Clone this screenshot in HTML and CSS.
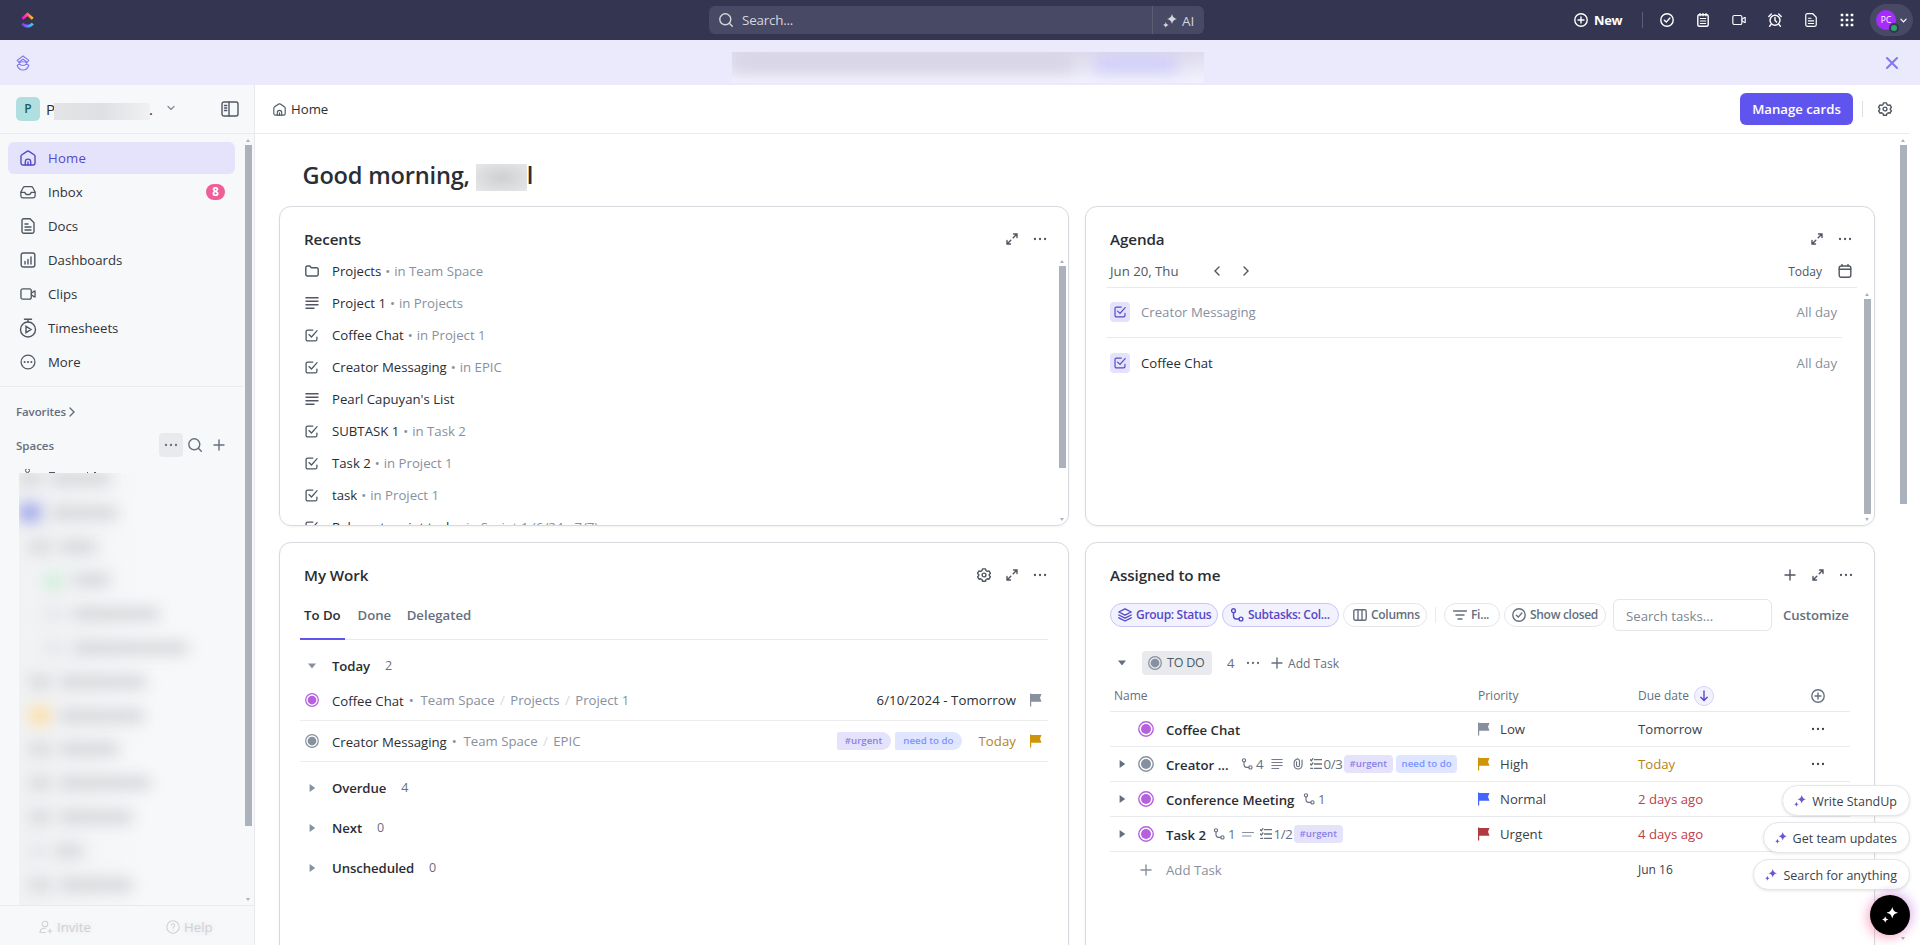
FILE: index.html
```html
<!DOCTYPE html>
<html lang="en">
<head>
<meta charset="utf-8">
<title>Home</title>
<link rel="stylesheet" href="styles.css">
</head>
<body>
<svg class="defs" width="0" height="0">
  <defs>
    <linearGradient id="g1" x1="0" x2="1"><stop offset="0" stop-color="#ff02f0"/><stop offset=".5" stop-color="#ff5a7a"/><stop offset="1" stop-color="#ffc800"/></linearGradient>
    <linearGradient id="g2" x1="0" x2="1"><stop offset="0" stop-color="#8930fd"/><stop offset="1" stop-color="#49ccf9"/></linearGradient>
  </defs>
  <symbol id="home" viewBox="0 0 16 16"><path d="M1 6.200Q1 5.500 1.600 5L7 1.300q1-.6 2 0L14.400 5q.6.500.6 1.200V13a2 2 0 0 1-2 2H3a2 2 0 0 1-2-2z"/><path d="M5.300 15v-3.200a2.700 2.700 0 0 1 5.400 0V15M8 12v3" /></symbol>
  <symbol id="inbox" viewBox="0 0 18 16"><path d="M5.200 2h7.600q1 0 1.500.9L17 8v4.500a2 2 0 0 1-2 2H3a2 2 0 0 1-2-2V8l2.700-5.100Q4.200 2 5.200 2z"/><path d="M1 8.300h4.300c.6 2 1.800 2.700 3.700 2.700s3.100-.7 3.700-2.700H17"/></symbol>
  <symbol id="doc" viewBox="0 0 16 16"><path d="M2 2.500A1.700 1.700 0 0 1 3.700.8H10l4 4v8.700a1.700 1.700 0 0 1-1.700 1.700H3.700A1.700 1.700 0 0 1 2 13.500z"/><path d="M5 6h3M5 9h6M5 12h6"/></symbol>
  <symbol id="dash" viewBox="0 0 16 16"><rect x="1.200" y="1" width="13.600" height="14" rx="2"/><path d="M5 9.500V12M8 7.500V12M11 5V12"/></symbol>
  <symbol id="video" viewBox="0 0 17 14"><rect x="1" y="1.500" width="11" height="11" rx="2"/><path d="M12 6.200l3-2.200h1v6h-1l-3-2.200"/></symbol>
  <symbol id="timer" viewBox="0 0 18 20"><circle cx="9" cy="11.500" r="7.500"/><path d="M5.500 1.300h7M9 1.300v2.500M7 8.300v6.400l5-3.200z"/></symbol>
  <symbol id="more" viewBox="0 0 18 18"><circle cx="9" cy="9" r="7.800"/><path class="dotline" d="M5.200 9h0M9 9h0M12.800 9h0"/></symbol>
  <symbol id="dots" viewBox="0 0 14 14"><path class="dotline" d="M2 7h0M7 7h0M12 7h0"/></symbol>
  <symbol id="search" viewBox="0 0 14 14"><circle cx="6.300" cy="6.300" r="5.500"/><path d="M10.300 10.300 13.300 13.300"/></symbol>
  <symbol id="plus" viewBox="0 0 12 12"><path d="M6 1v10M1 6h10"/></symbol>
  <symbol id="pluscircle" viewBox="0 0 14 14"><circle cx="7" cy="7" r="6.200"/><path d="M7 4v6M4 7h6"/></symbol>
  <symbol id="checkcircle" viewBox="0 0 14 14"><circle cx="7" cy="7" r="6.200"/><path d="M4.300 7.200 6.300 9.100 9.900 5"/></symbol>
  <symbol id="help" viewBox="0 0 14 14"><circle cx="7" cy="7" r="6.200"/><path d="M5.300 5.500a1.700 1.700 0 1 1 2.500 1.500q-.8.400-.8 1.200M7 10.300h0"/></symbol>
  <symbol id="person" viewBox="0 0 14 14"><circle cx="6" cy="4" r="2.800"/><path d="M6.500 12.500H1c0-3.500 2.500-4.500 5.500-4.300M11 9v4M9 11h4"/></symbol>
  <symbol id="notepad" viewBox="0 0 14 14"><rect x="1.800" y="1.800" width="10.400" height="11.400" rx="1.500"/><path d="M4 .3v2.500M7 .3v2.500M10 .3v2.500M4.300 5.500h5.400M4.300 8h5.400M4.300 10.500h5.400" stroke-width="1.200"/></symbol>
  <symbol id="alarm" viewBox="0 0 14 14"><circle cx="7" cy="7.300" r="5"/><path d="M7 4.500v3L8.600 9M.8 3.400 3.300 1M13.200 3.400 10.700 1M3 11.500l-1.400 1.700M11 11.500l1.400 1.700"/></symbol>
  <symbol id="apps" viewBox="0 0 14 14"><path class="appline" d="M2 2h0M7 2h0M12 2h0M2 7h0M7 7h0M12 7h0M2 12h0M7 12h0M12 12h0"/></symbol>
  <symbol id="chev" viewBox="0 0 8 8"><path d="M1 2.500 4 5.500 7 2.500"/></symbol>
  <symbol id="right" viewBox="0 0 8 12"><path d="M2 2l4 4-4 4"/></symbol>
  <symbol id="left" viewBox="0 0 8 12"><path d="M6 2 2 6l4 4"/></symbol>
  <symbol id="gear" viewBox="0 0 14 14"><path d="M5.500.9h3l.5 1.700 1.300.8 1.700-.5 1.400 2.500L12.300 6.500v1.200l1.200 1-1.500 2.500-1.700-.4-1.300.7-.5 1.700h-3L5 11.500l-1.300-.7-1.700.4L.5 8.700l1.200-1V6.500L.5 5.400 2 2.900l1.700.5L5 2.600z" stroke-linejoin="round"/><circle cx="7" cy="7" r="1.900"/></symbol>
  <symbol id="expand" viewBox="0 0 12 12"><path d="M7.500 1H11v3.500M11 1 7.200 4.800M4.500 11H1V7.500M1 11 4.800 7.200"/></symbol>
  <symbol id="folder" viewBox="0 0 14 12"><path d="M.8 2.500A1.500 1.500 0 0 1 2.300 1h2.500l1.500 1.700h5.400a1.500 1.500 0 0 1 1.500 1.500v5.300a1.500 1.500 0 0 1-1.500 1.500H2.300A1.500 1.500 0 0 1 .8 9.500z"/></symbol>
  <symbol id="list" viewBox="0 0 14 12"><path d="M.5 .8h13M.5 4.300h13M.5 7.800h13M.5 11.200h9"/></symbol>
  <symbol id="list2" viewBox="0 0 12 12"><path d="M.5 4.500h11M.5 8h8.500"/></symbol>
  <symbol id="task" viewBox="0 0 14 14"><path d="M8.500 1.200H2.800A1.600 1.600 0 0 0 1.200 2.800v8.400a1.600 1.600 0 0 0 1.600 1.600h8.400a1.600 1.600 0 0 0 1.600-1.600V8.700M4.200 6 7 8.600 13 1.800"/></symbol>
  <symbol id="cal" viewBox="0 0 14 14"><rect x="1.200" y="2" width="11.600" height="11.300" rx="2"/><path d="M1.200 5.200h11.600M4 .3V2M10 .3V2"/></symbol>
  <symbol id="flag" viewBox="0 0 12 14"><path class="solid" d="M0 .5h1.200v13H0zM1 1h10.500l-1.500 3.800 1.500 3.900H1z"/></symbol>
  <symbol id="status" viewBox="0 0 16 16"><circle cx="8" cy="8" r="7.200"/><circle class="solid" cx="8" cy="8" r="5"/></symbol>
  <symbol id="layers" viewBox="0 0 14 14"><path d="M7 .8 13.200 4 7 7.200.8 4zM.8 7 7 10.200 13.200 7M.8 9.800 7 13l6.200-3.200" stroke-linejoin="round"/></symbol>
  <symbol id="sub" viewBox="0 0 14 14"><circle cx="3.500" cy="2.700" r="1.900"/><circle cx="11" cy="11" r="1.900"/><path d="M3.500 4.600V8a3 3 0 0 0 3 3h2.600"/></symbol>
  <symbol id="cols" viewBox="0 0 14 12"><rect x=".8" y=".8" width="12.400" height="10.400" rx="1.500"/><path d="M5 1v10M9 1v10"/></symbol>
  <symbol id="filter" viewBox="0 0 14 10"><path d="M.5 1h13M3 5h8M5 9h4"/></symbol>
  <symbol id="checklist" viewBox="0 0 12 12"><path d="M4.500 1.700H12M4.500 6H12M4.500 10.300H12M.3 1.700l1 1 1.600-2M.3 6l1 1 1.600-2M.6 10.300h2"/></symbol>
  <symbol id="clip" viewBox="0 0 12 14"><path d="M4.300 4.500v4a1.700 1.700 0 0 0 3.400 0V3.300a2.300 2.300 0 0 0-3.500-1.900L2.700 2.600A3.500 3.500 0 0 0 1.500 5v3.200a4.600 4.600 0 0 0 9.200 0V2.500"/></symbol>
  <symbol id="down" viewBox="0 0 10 12"><path d="M5 1v9.500M1.800 7.300 5 10.500l3.200-3.200"/></symbol>
  <symbol id="spark" viewBox="0 0 14 14"><path class="solid" d="M9 0c.9 3.200 1.800 4.100 5 5-3.200.9-4.100 1.800-5 5-.9-3.200-1.800-4.100-5-5 3.200-.9 4.100-1.800 5-5zM2.800 8c.5 1.900 1 2.400 2.900 2.900-1.900.5-2.400 1-2.900 2.900-.5-1.900-1-2.400-2.800-2.900 1.800-.5 2.300-1 2.800-2.900z"/></symbol>
  <symbol id="panel" viewBox="0 0 18 16"><rect x="1" y="1" width="16" height="14" rx="2"/><path d="M8 1v14M3.500 4.500h2.300M3.500 7h2.300M3.500 9.500h2.300"/></symbol>
  <symbol id="x" viewBox="0 0 12 12"><path d="M1 1l10 10M11 1 1 11"/></symbol>
</svg>

<header class="topbar">
  <svg class="logo" viewBox="0 0 13 16"><path d="M1.300 6.800 6.500 2.200l5.200 4.600" fill="none" stroke="url(#g1)" stroke-width="2.800"/><path d="M1.200 11.600c3 3.500 7.600 3.500 10.600 0" fill="none" stroke="url(#g2)" stroke-width="2.800"/></svg>
  <div class="searchbar">
    <svg class="i s14"><use href="#search"/></svg><span class="ph">Search...</span>
    <div class="ai"><svg class="i s14"><use href="#spark"/></svg><span>AI</span></div>
  </div>
  <div class="tools">
    <svg class="i s14"><use href="#pluscircle"/></svg><b>New</b><i class="vline"></i>
    <div class="toolicons">
      <svg class="i s14"><use href="#checkcircle"/></svg>
      <svg class="i s14"><use href="#notepad"/></svg>
      <svg class="i s14"><use href="#video"/></svg>
      <svg class="i s14"><use href="#alarm"/></svg>
      <svg class="i s14"><use href="#doc"/></svg>
      <svg class="i s14"><use href="#apps"/></svg>
    </div>
    <div class="user"><span class="ava">PC<i class="online"></i></span><svg class="i chv"><use href="#chev"/></svg></div>
  </div>
</header>

<div class="banner">
  <svg class="i bicon" viewBox="0 0 14 16"><path d="M7 1 1.200 5.300l1.500 2L7 4.200l4.300 3.100 1.500-2zM3.600 8C4 6.300 10 6.300 10.400 8M1.200 10.500l1.900-1.600c2.200 2.200 5.600 2.200 7.800 0l1.900 1.600C11.500 14 9.500 15 7 15s-4.500-1-5.800-4.500z"/></svg>
  <div class="bblur"><i class="b1"></i><i class="b2"></i></div>
  <svg class="i close"><use href="#x"/></svg>
</div>

<div class="body">
  <aside class="side">
    <div class="ws">
      <span class="wava">P</span><span class="wname">P</span><i class="wblur"></i><span class="wname">.</span>
      <svg class="i s8 wchev"><use href="#chev"/></svg><svg class="i panel"><use href="#panel"/></svg>
    </div>
    <nav class="nav">
      <a class="on"><svg class="i s16"><use href="#home"/></svg>Home</a>
      <a><svg class="i s16"><use href="#inbox"/></svg>Inbox<em>8</em></a>
      <a><svg class="i s16"><use href="#doc"/></svg>Docs</a>
      <a><svg class="i s16"><use href="#dash"/></svg>Dashboards</a>
      <a><svg class="i s16"><use href="#video"/></svg>Clips</a>
      <a><svg class="i s18"><use href="#timer"/></svg>Timesheets</a>
      <a><svg class="i s16"><use href="#more"/></svg>More</a>
    </nav>
    <div class="sect fav">Favorites <svg class="i"><use href="#right"/></svg></div>
    <div class="sect spaces"><span>Spaces</span><i class="dotbtn"><svg class="i s14"><use href="#dots"/></svg></i><svg class="i s14"><use href="#search"/></svg><svg class="i s12"><use href="#plus"/></svg></div>
    <div class="peek"><i class="ring"></i><i class="m1"></i><i class="m2"></i><i class="m3"></i></div>
    <div class="tree">
      <div class="trow"><i style="width:22px"></i><i style="width:60px"></i></div>
      <div class="trow"><i class="blue" style="width:22px"></i><i style="width:66px"></i></div>
      <div class="trow l1"><i style="width:20px"></i><i style="width:36px"></i></div>
      <div class="trow l2"><i class="green" style="width:18px"></i><i style="width:36px"></i></div>
      <div class="trow l2"><i class="lt" style="width:18px"></i><i style="width:86px"></i></div>
      <div class="trow l2"><i class="lt" style="width:18px"></i><i style="width:114px"></i></div>
      <div class="trow l1"><i style="width:20px"></i><i style="width:86px"></i></div>
      <div class="trow l1"><i class="yellow" style="width:20px"></i><i style="width:84px"></i></div>
      <div class="trow l1"><i style="width:20px"></i><i style="width:58px"></i></div>
      <div class="trow l1"><i style="width:20px"></i><i style="width:90px"></i></div>
      <div class="trow l1"><i style="width:20px"></i><i style="width:72px"></i></div>
      <div class="trow l1"><i class="lt" style="width:16px"></i><i style="width:26px"></i></div>
      <div class="trow l1"><i style="width:20px"></i><i style="width:72px"></i></div>
    </div>
    <footer class="foot"><span><svg class="i s14"><use href="#person"/></svg>Invite</span><span><svg class="i s14"><use href="#help"/></svg>Help</span></footer>
    <div class="sb side-sb"><i></i></div>
  </aside>

  <main class="main">
    <div class="crumb">
      <svg class="i s13"><use href="#home"/></svg><span>Home</span>
      <button>Manage cards</button><i class="vline"></i><svg class="i s14"><use href="#gear"/></svg>
    </div>
    <h1>Good morning, <i class="nblur"></i>l</h1>
    <div class="sb main-sb"><i></i></div>

    <div class="cards">
      <section class="card">
        <div class="chead"><h2>Recents</h2><svg class="i s12"><use href="#expand"/></svg><svg class="i s14"><use href="#dots"/></svg></div>
        <ul class="recents">
          <li><svg class="i s14"><use href="#folder"/></svg>Projects<span>•</span><span>in Team Space</span></li>
          <li><svg class="i s14 ls"><use href="#list"/></svg>Project 1<span>•</span><span>in Projects</span></li>
          <li><svg class="i s13"><use href="#task"/></svg>Coffee Chat<span>•</span><span>in Project 1</span></li>
          <li><svg class="i s13"><use href="#task"/></svg>Creator Messaging<span>•</span><span>in EPIC</span></li>
          <li><svg class="i s14 ls"><use href="#list"/></svg>Pearl Capuyan's List</li>
          <li><svg class="i s13"><use href="#task"/></svg>SUBTASK 1<span>•</span><span>in Task 2</span></li>
          <li><svg class="i s13"><use href="#task"/></svg>Task 2<span>•</span><span>in Project 1</span></li>
          <li><svg class="i s13"><use href="#task"/></svg>task<span>•</span><span>in Project 1</span></li>
          <li><svg class="i s13"><use href="#task"/></svg>Relevant sprint task<span>•</span><span>in Sprint 1 (6/24 - 7/7)</span></li>
        </ul>
        <div class="sb rec-sb"><i></i></div>
      </section>

      <section class="card">
        <div class="chead agh"><h2>Agenda</h2><svg class="i s12"><use href="#expand"/></svg><svg class="i s14"><use href="#dots"/></svg></div>
        <div class="agbar"><span class="date">Jun 20, Thu</span><svg class="i arr"><use href="#left"/></svg><svg class="i arr"><use href="#right"/></svg><span class="today">Today</span><svg class="i s14"><use href="#cal"/></svg></div>
        <div class="ag dim"><i><svg class="i s12"><use href="#task"/></svg></i><span>Creator Messaging</span><span>All day</span></div>
        <div class="ag"><i><svg class="i s12"><use href="#task"/></svg></i><span>Coffee Chat</span><span>All day</span></div>
        <div class="sb ag-sb"><i></i></div>
      </section>

      <section class="card">
        <div class="chead"><h2>My Work</h2><svg class="i s14 gear"><use href="#gear"/></svg><svg class="i s12"><use href="#expand"/></svg><svg class="i s14"><use href="#dots"/></svg></div>
        <div class="tabs"><span class="on">To Do</span><span>Done</span><span>Delegated</span></div>
        <div class="grp first"><i class="tri d"></i><b>Today</b><span>2</span></div>
        <div class="work"><svg class="i s14 pur"><use href="#status"/></svg><span class="nm">Coffee Chat</span><span class="path">• &nbsp;Team Space <s>/</s> Projects <s>/</s> Project 1</span><span class="due">6/10/2024 - Tomorrow</span><svg class="fl grey"><use href="#flag"/></svg></div>
        <div class="work"><svg class="i s14 gry"><use href="#status"/></svg><span class="nm">Creator Messaging</span><span class="path">• &nbsp;Team Space <s>/</s> EPIC</span><span class="tag p r">#urgent</span><span class="tag b r">need to do</span><span class="due am">Today</span><svg class="fl amber"><use href="#flag"/></svg></div>
        <div class="grp second"><i class="tri"></i><b>Overdue</b><span>4</span></div>
        <div class="grp"><i class="tri"></i><b>Next</b><span>0</span></div>
        <div class="grp"><i class="tri"></i><b>Unscheduled</b><span>0</span></div>
      </section>

      <section class="card">
        <div class="chead"><h2>Assigned to me</h2><svg class="i s12 addp"><use href="#plus"/></svg><svg class="i s12"><use href="#expand"/></svg><svg class="i s14"><use href="#dots"/></svg></div>
        <div class="chips">
          <span class="chip v c1"><svg class="i s14"><use href="#layers"/></svg>Group: Status</span>
          <span class="chip v c2"><svg class="i s14"><use href="#sub"/></svg>Subtasks: Col...</span>
          <span class="chip c3"><svg class="i s14"><use href="#cols"/></svg>Columns</span>
          <i class="vline"></i>
          <span class="chip c4"><svg class="i s14"><use href="#filter"/></svg>Fi...</span>
          <span class="chip c5"><svg class="i s14"><use href="#checkcircle"/></svg>Show closed</span>
          <span class="inp">Search tasks...</span>
          <span class="cust">Customize</span>
        </div>
        <div class="todo"><i class="tri d dk"></i><span class="st"><svg class="i s14 gry"><use href="#status"/></svg>TO DO</span><span class="n">4</span><svg class="i s14"><use href="#dots"/></svg><svg class="i s12"><use href="#plus"/></svg><span>Add Task</span></div>
        <div class="tr th"><span>Name</span><span>Priority</span><span class="dd">Due date <i><svg class="i"><use href="#down"/></svg></i></span><svg class="i s14"><use href="#pluscircle"/></svg></div>
        <div class="tr"><span class="name"><i class="tri no"></i><svg class="i s16 pur"><use href="#status"/></svg><b>Coffee Chat</b></span><span class="pri"><svg class="fl grey"><use href="#flag"/></svg>Low</span><span>Tomorrow</span><svg class="i s14"><use href="#dots"/></svg></div>
        <div class="tr"><span class="name"><i class="tri dk"></i><svg class="i s16 gry"><use href="#status"/></svg><b class="trunc">Creator ...</b><svg class="i s12 m"><use href="#sub"/></svg><u>4</u><svg class="i s12 m ls g1"><use href="#list"/></svg><svg class="i s12 m g2"><use href="#clip"/></svg><svg class="i s12 m g3"><use href="#checklist"/></svg><u class="frac">0/3</u><span class="tag p">#urgent</span><span class="tag b">need to do</span></span><span class="pri"><svg class="fl amber"><use href="#flag"/></svg>High</span><span class="am">Today</span><svg class="i s14"><use href="#dots"/></svg></div>
        <div class="tr"><span class="name"><i class="tri dk"></i><svg class="i s16 pur"><use href="#status"/></svg><b class="conf">Conference Meeting</b><svg class="i s12 m"><use href="#sub"/></svg><u>1</u></span><span class="pri"><svg class="fl bl"><use href="#flag"/></svg>Normal</span><span class="rd">2 days ago</span></div>
        <div class="tr"><span class="name"><i class="tri dk"></i><svg class="i s16 pur"><use href="#status"/></svg><b class="t2">Task 2</b><svg class="i s12 m"><use href="#sub"/></svg><u>1</u><svg class="i s12 m short"><use href="#list2"/></svg><svg class="i s12 m g3"><use href="#checklist"/></svg><u class="frac">1/2</u><span class="tag p">#urgent</span></span><span class="pri"><svg class="fl red"><use href="#flag"/></svg>Urgent</span><span class="rd">4 days ago</span></div>
        <div class="tr last"><span class="name add"><svg class="i s12"><use href="#plus"/></svg>Add Task</span><span></span><span class="sm">Jun 16</span></div>
      </section>
    </div>
  </main>
</div>

<div class="float">
  <span><svg><use href="#spark"/></svg>Write StandUp</span>
  <span><svg><use href="#spark"/></svg>Get team updates</span>
  <span><svg><use href="#spark"/></svg>Search for anything</span>
  <i><svg><use href="#spark"/></svg></i>
</div>
</body>
</html>
```
FILE: styles.css
```css
* { box-sizing: border-box; }
html, body { height: 945px; overflow: hidden; }
body { margin: 0; font: 13.2px/20px "Open Sans", "Noto Sans", sans-serif; color: #2a2e34; background: #fff; position: relative; white-space: nowrap; }
i { font-style: normal; display: block; }
s, u { text-decoration: none; }
.defs { position: absolute; }
svg { flex: none; display: block; }
.i { fill: none; stroke: currentColor; stroke-width: 1.4; stroke-linecap: round; }
.i.ls { stroke-linecap: butt; }
.s8 { width: 8px; height: 8px; }
.s12 { width: 12px; height: 12px; }
.s13 { width: 13px; height: 13px; }
.s14 { width: 14px; height: 14px; }
.s16 { width: 16px; height: 16px; }
.s18 { width: 18px; height: 20px; margin: 0 -1px; }
.solid { fill: currentColor; stroke: none; }
.dotline { stroke-width: 2.3; }
.appline { stroke-width: 2.6; stroke-linecap: square; }
.vline { width: 1px; height: 16px; background: #dcdfe4; flex: none; }

/* top bar */
.topbar { height: 40px; background: #343551; color: #e6e6ec; display: flex; align-items: center; }
.logo { width: 13px; height: 16px; margin-left: 21px; }
.searchbar { margin-left: 675px; width: 495px; height: 28px; border-radius: 6px; background: #484964; display: flex; align-items: center; padding-left: 10px; color: #d5d5dd; }
.ph { margin-left: 9px; flex: 1; font-size: 13.4px; letter-spacing: -.2px; }
.ai { width: 52px; height: 28px; border-left: 1px solid #5c5d75; display: flex; align-items: center; padding: 1px 0 0 10px; gap: 5px; font-size: 13.5px; }
.tools { margin-left: 370px; display: flex; align-items: center; color: #fff; }
.tools b { margin-left: 6px; width: 48px; font-size: 12.9px; font-weight: 700; letter-spacing: -.3px; }
.tools .vline { background: #5c5d75; }
.toolicons { display: flex; gap: 22px; margin-left: 17px; width: 210px; }
.user { width: 43px; height: 32px; border-radius: 16px; background: #484964; display: flex; align-items: center; padding-left: 6px; gap: 4px; }
.chv { width: 7px; height: 7px; }
.ava { width: 20px; height: 20px; border-radius: 50%; background: #a52bff; font-size: 8.5px; text-align: center; position: relative; }
.online { position: absolute; right: -3px; bottom: -3px; width: 10px; height: 10px; border-radius: 50%; background: #30a46c; border: 2px solid #343551; }

.banner { height: 45px; background: #ebeafd; display: flex; align-items: center; color: #8277f0; padding: 0 22px 0 16px; }
.bicon { width: 14px; height: 16px; stroke-width: 1.1; }
.bblur { margin: 9px 0 0 702px; width: 472px; height: 31px; display: flex; gap: 20px; overflow: hidden; background: linear-gradient(#dedbec, #f1f0fc 90%); }
.b1 { width: 342px; height: 15px; background: #d3d0e2; filter: blur(8px); margin-top: 4px; }
.b2 { width: 84px; height: 14px; background: #cbc8fb; filter: blur(8px); margin-top: 5px; }
.close { width: 12px; height: 12px; margin-left: auto; stroke-width: 2; }

/* sidebar */
.body { display: flex; height: 860px; }
.side { width: 255px; background: #f7f8fa; border-right: 1px solid #e8eaed; position: relative; color: #4f5762; }
.ws { height: 49px; border-bottom: 1px solid #e8eaed; display: flex; align-items: center; padding: 0 15px 0 16px; }
.wava { width: 24px; height: 24px; border-radius: 5px; background: #b0dfe0; color: #1f5b5c; font-weight: 600; font-size: 12px; line-height: 24px; text-align: center; margin-right: 6px; }
.wname { font-size: 15px; font-weight: 500; color: #2a2e34; }
.wblur { width: 96px; height: 17px; margin: 5px -1px 0 -1px; background: linear-gradient(90deg, #e3e4e6, #dfe0e3 50%, #f0f1f3); }
.wchev { margin: 0 0 2px 14px; stroke-width: 1.2; color: #7c8592; }
.panel { width: 18px; height: 16px; margin-left: auto; }
.nav { padding: 8px 19px 0 8px; height: 253px; border-bottom: 1px solid #e8eaed; margin-right: 11px; }
.nav a { display: flex; align-items: center; height: 32px; margin-bottom: 2px; padding-left: 12px; gap: 12px; border-radius: 6px; color: #2f343b; width: 227px; }
.nav a svg { color: #4f5762; }
.nav .on, .nav .on svg { color: #5549c8; }
.nav .on { background: #e5e3fb; font-weight: 500; letter-spacing: .2px; }
.nav em { margin-left: auto; margin-right: 10px; width: 19px; height: 16px; border-radius: 8px; background: #ee5e99; color: #fff; font: 700 11.5px/16px "Open Sans", sans-serif; text-align: center; }
.sect { padding-left: 16px; font-size: 11.5px; font-weight: 600; color: #656f7d; display: flex; align-items: center; }
.fav { margin-top: 15px; height: 20px; gap: 2px; letter-spacing: -.1px; }
.fav .i { width: 8px; height: 12px; }
.spaces { height: 24px; margin-top: 11px; }
.spaces span { width: 143px; padding-top: 1px; }
.dotbtn { width: 24px; height: 24px; border-radius: 4px; background: #e8eaed; display: grid; place-items: center; margin-right: 5px; }
.spaces .s12 { margin-left: 11px; }
.peek { height: 4px; margin: 12px 0 0 25px; overflow: hidden; display: flex; align-items: flex-end; }
.peek .ring { width: 5px; height: 5px; border: 1.5px solid #4f5762; border-radius: 50%; margin-right: 19px; }
.m1, .m2, .m3 { height: 1px; background: #4f5762; }
.m1 { width: 6px; margin-right: 32px; } .m2 { width: 1px; margin-right: 6px; } .m3 { width: 2px; }
.tree { margin: 0 0 0 19px; width: 211px; height: 432px; overflow: hidden; background: linear-gradient(90deg, #f1f2f4, #f7f8fa 60%); }
.trow { display: flex; gap: 10px; height: 33.8px; padding: 0; }
.trow i { height: 12px; background: #d0d2d5; filter: blur(7.5px); }
.trow.l1 { padding-left: 11px; }
.trow.l2 { padding-left: 26px; }
.trow .lt { background: #e0e2e5; }
.trow .blue { background: #98a1e6; height: 17px; margin-top: -3px; }
.trow .green { background: #c9ecd5; height: 15px; }
.trow .yellow { background: #fddc9e; height: 17px; margin-top: -3px; }
.foot { height: 40px; border-top: 1px solid #e8eaed; display: flex; padding: 10px 0 0 39px; color: #cfd1d5; text-shadow: 0 0 6px #ddd; }
.foot span { display: flex; align-items: center; gap: 4px; width: 127px; height: 21px; flex: none; }
.foot svg { stroke-width: 1.1; }
.foot span:last-child { width: 60px; }
.sb { position: absolute; width: 7px; display: flex; }
.sb::before, .sb::after { content: ""; position: absolute; left: 1px; border: 2.5px solid transparent; }
.sb::before { top: -6px; border-top: 0; border-bottom: 3px solid #aab1bb; }
.sb::after { bottom: -6px; border-bottom: 0; border-top: 3px solid #aab1bb; }
.sb i { width: 7px; background: #abb2bc; }
.side-sb { left: 245px; top: 60px; height: 750px; }
.side-sb i { height: 681px; }

/* main */
.main { flex: 1; position: relative; overflow: hidden; }
.crumb { height: 49px; border-bottom: 1px solid #e8eaed; margin-right: 11px; display: flex; align-items: center; padding: 0 17px 0 18px; gap: 5px; }
.crumb > svg { color: #4f5762; }
button { margin-left: auto; width: 113px; height: 32px; border: 0; border-radius: 6px; background: #5f55ee; color: #fff; font: 600 13.2px "Open Sans", sans-serif; padding: 0; }
.crumb .vline { margin: 0 10px 0 4px; }
h1 { font-size: 23.6px; line-height: 32px; font-weight: 550; margin: 25px 0 0 47.5px; height: 32px; display: flex; align-items: center; letter-spacing: -.2px; }
.nblur { width: 51px; height: 27px; background: radial-gradient(#cfd0d2, #e6e7e8); margin: 4px 0 0 6px; }
.main-sb { left: 1645px; top: 60px; height: 789px; }
.main-sb i { height: 359px; }
.cards { display: grid; grid-template-columns: 790px 790px; grid-template-rows: 320px 480px; gap: 16px; margin: 15px 0 0 24px; }
.card { border: 1px solid #d6d9de; border-radius: 12px; position: relative; overflow: hidden; box-shadow: 0 1px 3px rgba(0,0,0,.05); padding: 19px 20px 0 20px; }
.chead { display: flex; align-items: center; height: 26px; margin-bottom: 1px; padding: 0 1px 0 4px; gap: 15px; color: #4f5762; }
.agh { padding-right: 2px; }
.addp { margin-right: 1px; }
h2 { margin: -1px auto 0 0; font-size: 15.2px; font-weight: 600; letter-spacing: -.1px; color: #2a2e34; }
.recents { list-style: none; margin: 3px 0 0; padding: 0 0 0 5px; }
.recents li { height: 32px; display: flex; align-items: center; }
.recents svg { margin-right: 13px; color: #4f5762; }
.recents .s13 { margin-right: 14px; }
.recents span { color: #87909e; margin-left: 4px; }
.rec-sb { left: 779px; top: 59px; height: 249px; }
.rec-sb i { height: 202px; }

.agbar { display: flex; align-items: center; height: 35px; margin: 0 -3px 0 0; padding: 2px 5px 0 4px; border-bottom: 1px solid #e8eaed; color: #4f5762; }
.date { width: 103px; }
.arr { width: 8px; height: 12px; margin-right: 21px; }
.today { margin-left: auto; margin-right: 16px; font-size: 12px; padding-top: 1px; }
.ag { display: flex; align-items: center; height: 50px; width: 736px; padding: 0 5px 1px 4px; border-bottom: 1px solid #e8eaed; }
.ag + .ag { border: 0; padding-bottom: 0; }
.ag i { width: 20px; height: 20px; border-radius: 4px; background: #e5e3fb; color: #5549c8; display: grid; place-items: center; margin-right: 11px; }
.ag span:last-child { margin-left: auto; color: #87909e; }
.dim { color: #87909e; }
.ag-sb { left: 778px; top: 92px; height: 216px; }
.ag-sb i { height: 215px; }

.tabs { display: flex; height: 51px; border-bottom: 1px solid #e8eaed; font-weight: 600; color: #656f7d; gap: 15.5px; padding-top: 16px; }
.tabs .on { color: #2a2e34; border-bottom: 2px solid #5f55ee; height: 35px; width: 45px; padding-left: 4px; margin-right: -3px; }
.grp { display: flex; align-items: center; height: 40px; padding-left: 8px; }
.grp b { font-weight: 600; margin: 0 15px 0 16px; letter-spacing: -.1px; }
.grp span { color: #656f7d; font-size: 12.5px; }
.first { padding-top: 12px; }
.second { margin-top: 6px; }
.tri { width: 8px; height: 8px; background: #87909e; clip-path: polygon(20% 0, 90% 50%, 20% 100%); flex: none; }
.tri.d { clip-path: polygon(0 20%, 100% 20%, 50% 80%); }
.tri.dk { background: #656f7d; }
.tri.no { visibility: hidden; }
.work { display: flex; align-items: center; height: 41px; border-bottom: 1px solid #ececef; padding: 0 6px 0 5px; }
.nm { margin: 2px 5px 0 13px; }
.path { color: #87909e; margin-right: auto; }
.path s { color: #d6d9de; margin: 0 2px; }
.due { margin: 0 14px 0 16px; letter-spacing: .08px; }
.pur { color: #b660e0; }
.gry { color: #87909e; }
.fl { width: 12px; height: 14px; }
.grey { color: #87909e; }
.amber { color: #cf940a; }
.bl { color: #4466ff; }
.red { color: #b13a41; }
.am { color: #b88214; }
.rd { color: #c0404a; }
.tag { height: 18px; line-height: 18px; font-size: 9.7px; font-weight: 600; padding: 0 5.5px; border-radius: 4px; }
.tag.r { border-radius: 2px 9px 9px 2px; padding: 0 9px 0 8px; margin-right: 4px; }
.p { background: #e5e3fb; color: #8b7fe8; }
.b { background: #e0e6ff; color: #7b94ff; }
.work .tag.b { margin-right: 0; }

.chips { display: flex; align-items: center; height: 32px; margin: 11px 0 0 4px; gap: 4px; }
.chip { height: 24px; border: 1px solid #e4e6ea; border-radius: 12px; display: flex; align-items: center; gap: 4px; padding-left: 8px; font-size: 12px; font-weight: 600; letter-spacing: -.3px; color: #656f7d; }
.v { border-color: #c9c4f7; background: #f2f1fe; color: #5549c8; padding-left: 7px; }
.c1 { width: 108px; } .c2 { width: 117px; } .c3 { width: 84px; padding-left: 9px; } .c4 { width: 56px; } .c5 { width: 102px; padding-left: 7px; }
.chips .vline { margin: 0 4px; background: #e8eaed; }
.inp { width: 159px; height: 32px; border: 1px solid #e4e6ea; border-radius: 6px; margin-left: 3px; padding: 6px 12px; color: #7c8592; }
.cust { margin-left: 7px; font-weight: 600; color: #656f7d; letter-spacing: -.1px; }
.todo { display: flex; align-items: center; height: 24px; margin: 20px 0 0 4px; padding-left: 8px; font-size: 12.1px; font-weight: 500; color: #656f7d; }
.todo > span:last-child { padding-top: 1px; }
.st { width: 70px; height: 24px; border-radius: 4px; background: #e8eaed; display: flex; align-items: center; gap: 5px; padding-left: 6px; margin: 0 15px 0 16px; color: #4f5762; font-size: 12.5px; letter-spacing: -.2px; }
.n { width: 19px; font-size: 13px; }
.todo > .s12 { margin: 0 5px 0 11px; }
.tr { display: grid; grid-template-columns: 368px 160px 173px 14px; align-items: center; height: 35px; border-bottom: 1px solid #e8eaed; margin: 0 4px 0 4px; color: #3b4149; }
.th { height: 37px; padding-top: 5px; font-size: 12px; color: #656f7d; }
.th > span:first-child { padding-left: 4px; }
.dd { display: flex; align-items: center; gap: 5px; }
.dd i { width: 20px; height: 20px; border: 1px solid #d5d1f8; background: #f2f1fe; border-radius: 50%; display: grid; place-items: center; color: #5549c8; }
.dd svg { width: 10px; height: 12px; }
.name { display: flex; align-items: center; padding-left: 8px; color: #656f7d; }
.name .s16 { margin: 0 12px 0 12px; }
.name b { font-weight: 550; color: #2a2e34; margin-top: 2px; }
.name .m { stroke-width: 1.3; margin-right: 3px; }
.trunc { width: 75px; } .conf { width: 137px; } .t2 { width: 47px; }
.name .g1 { margin-left: 7px; margin-right: 9px; stroke-width: 1.1; }
.name .g2 { margin-right: 6px; }
.name .g3 { margin-right: 2px; }
.name .short { margin-left: 6px; margin-right: 6px; stroke-width: 1.1; color: #87909e; }
.frac { letter-spacing: -.3px; }
.name .tag { margin-left: 1.5px; margin-right: 2px; }
.pri { display: flex; align-items: center; gap: 10px; }
.last { border: 0; height: 36px; }
.add { padding-left: 30px; gap: 14px; color: #87909e; }
.sm { font-size: 12px; }

/* assistant */
.float { position: absolute; right: 10px; top: 785px; display: flex; flex-direction: column; align-items: flex-end; gap: 6px; color: #3b4149; }
.float span { height: 31px; border: 1px solid #e4e6ea; border-radius: 16px; background: #fff; box-shadow: 0 1px 3px rgba(0,0,0,.1); display: flex; align-items: center; gap: 6px; padding: 2px 12px 0 11px; font-size: 12.5px; }
.float span svg { width: 12px; height: 12px; color: #6b57d2; margin-bottom: 2px; }
.float i { width: 40px; height: 40px; margin-top: -1px; border-radius: 50%; background: #000; color: #fff; display: grid; place-items: center; box-shadow: -3px 3px 12px rgba(255,60,110,.35), 3px -3px 12px rgba(150,80,230,.3); }
.float i svg { width: 16px; height: 16px; }
```
